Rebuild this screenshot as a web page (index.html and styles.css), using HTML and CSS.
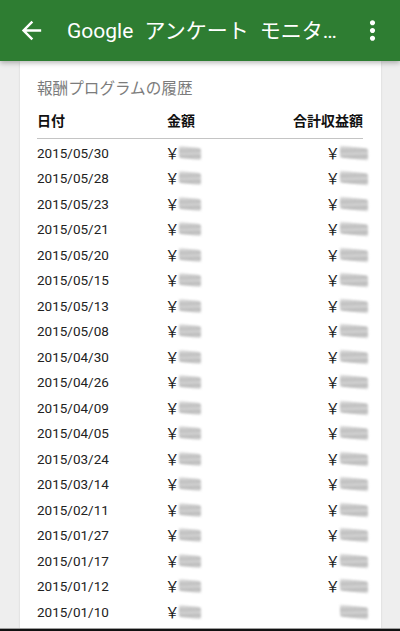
FILE: index.html
```html
<!DOCTYPE html>
<html lang="ja">
<head>
<meta charset="utf-8">
<link rel="stylesheet" href="styles.css">
</head>
<body>
<div class="screen">
  <header class="appbar">
    <svg class="back" viewBox="0 0 24 24" width="29" height="29"><path fill="#fff" d="M20 11H7.83l5.59-5.59L12 4l-8 8 8 8 1.41-1.41L7.83 13H20v-2z"/></svg>
    <div class="title">Google アンケート モニタ…</div>
    <svg class="more" viewBox="0 0 24 24" width="31" height="31"><path fill="#fff" d="M12 8c1.1 0 2-.9 2-2s-.9-2-2-2-2 .9-2 2 .9 2 2 2zm0 2c-1.1 0-2 .9-2 2s.9 2 2 2 2-.9 2-2-.9-2-2-2zm0 6c-1.1 0-2 .9-2 2s.9 2 2 2 2-.9 2-2-.9-2-2-2z"/></svg>
  </header>
  <main class="content">
    <section class="card">
      <h2 class="card-title">報酬プログラムの履歴</h2>
      <div class="thead">
        <span class="c-date">日付</span>
        <span class="c-amt">金額</span>
        <span class="c-total">合計収益額</span>
      </div>
      <div class="rows">
        <div class="row"><span class="c-date">2015/05/30</span><span class="c-amt"><b class="yen">￥</b><i class="blur s"></i></span><span class="c-total"><b class="yen">￥</b><i class="blur l"></i></span></div>
        <div class="row"><span class="c-date">2015/05/28</span><span class="c-amt"><b class="yen">￥</b><i class="blur s"></i></span><span class="c-total"><b class="yen">￥</b><i class="blur l"></i></span></div>
        <div class="row"><span class="c-date">2015/05/23</span><span class="c-amt"><b class="yen">￥</b><i class="blur s"></i></span><span class="c-total"><b class="yen">￥</b><i class="blur l"></i></span></div>
        <div class="row"><span class="c-date">2015/05/21</span><span class="c-amt"><b class="yen">￥</b><i class="blur s"></i></span><span class="c-total"><b class="yen">￥</b><i class="blur l"></i></span></div>
        <div class="row"><span class="c-date">2015/05/20</span><span class="c-amt"><b class="yen">￥</b><i class="blur s"></i></span><span class="c-total"><b class="yen">￥</b><i class="blur l"></i></span></div>
        <div class="row"><span class="c-date">2015/05/15</span><span class="c-amt"><b class="yen">￥</b><i class="blur s"></i></span><span class="c-total"><b class="yen">￥</b><i class="blur l"></i></span></div>
        <div class="row"><span class="c-date">2015/05/13</span><span class="c-amt"><b class="yen">￥</b><i class="blur s"></i></span><span class="c-total"><b class="yen">￥</b><i class="blur l"></i></span></div>
        <div class="row"><span class="c-date">2015/05/08</span><span class="c-amt"><b class="yen">￥</b><i class="blur s"></i></span><span class="c-total"><b class="yen">￥</b><i class="blur l"></i></span></div>
        <div class="row"><span class="c-date">2015/04/30</span><span class="c-amt"><b class="yen">￥</b><i class="blur s"></i></span><span class="c-total"><b class="yen">￥</b><i class="blur l"></i></span></div>
        <div class="row"><span class="c-date">2015/04/26</span><span class="c-amt"><b class="yen">￥</b><i class="blur s"></i></span><span class="c-total"><b class="yen">￥</b><i class="blur l"></i></span></div>
        <div class="row"><span class="c-date">2015/04/09</span><span class="c-amt"><b class="yen">￥</b><i class="blur s"></i></span><span class="c-total"><b class="yen">￥</b><i class="blur l"></i></span></div>
        <div class="row"><span class="c-date">2015/04/05</span><span class="c-amt"><b class="yen">￥</b><i class="blur s"></i></span><span class="c-total"><b class="yen">￥</b><i class="blur l"></i></span></div>
        <div class="row"><span class="c-date">2015/03/24</span><span class="c-amt"><b class="yen">￥</b><i class="blur s"></i></span><span class="c-total"><b class="yen">￥</b><i class="blur l"></i></span></div>
        <div class="row"><span class="c-date">2015/03/14</span><span class="c-amt"><b class="yen">￥</b><i class="blur s"></i></span><span class="c-total"><b class="yen">￥</b><i class="blur l"></i></span></div>
        <div class="row"><span class="c-date">2015/02/11</span><span class="c-amt"><b class="yen">￥</b><i class="blur s"></i></span><span class="c-total"><b class="yen">￥</b><i class="blur l"></i></span></div>
        <div class="row"><span class="c-date">2015/01/27</span><span class="c-amt"><b class="yen">￥</b><i class="blur s"></i></span><span class="c-total"><b class="yen">￥</b><i class="blur l"></i></span></div>
        <div class="row"><span class="c-date">2015/01/17</span><span class="c-amt"><b class="yen">￥</b><i class="blur s"></i></span><span class="c-total"><b class="yen">￥</b><i class="blur l"></i></span></div>
        <div class="row"><span class="c-date">2015/01/12</span><span class="c-amt"><b class="yen">￥</b><i class="blur s"></i></span><span class="c-total"><b class="yen">￥</b><i class="blur l"></i></span></div>
        <div class="row"><span class="c-date">2015/01/10</span><span class="c-amt"><b class="yen">￥</b><i class="blur s"></i></span><span class="c-total"><i class="blur l"></i></span></div>
      </div>
    </section>
  </main>
  <div class="bottom-edge"></div>
</div>
</body>
</html>
```

FILE: styles.css
```css
* { box-sizing: border-box; }
html, body { margin: 0; padding: 0; }
body {
  background: #eeeeee;
  font-family: Roboto, "Noto Sans CJK JP", sans-serif;
  color: #212121;
}
.screen {
  height: 631px;
  display: flex;
  flex-direction: column;
  overflow: hidden;
}
.appbar {
  flex: 0 0 61px;
  height: 61px;
  background: #2e7d32;
  display: flex;
  align-items: center;
  padding-left: 17px;
  position: relative;
  z-index: 2;
  box-shadow: 0 2px 5px rgba(0,0,0,0.28);
}
.back { flex: 0 0 auto; }
.title {
  margin-left: 21px;
  flex: 0 0 280px;
  color: #fff;
  font-size: 21px;
  word-spacing: 6px;
  white-space: nowrap;
  line-height: 28px;
}
.more { margin-left: 10px; flex: 0 0 auto; }
.content {
  flex: 1 1 auto;
  padding: 0 19px 0 20px;
  display: flex;
  min-height: 0;
}
.card {
  flex: 1 1 auto;
  background: #fff;
  padding: 16px 18px 0 17px;
  box-shadow: 0 1px 2px rgba(0,0,0,0.12);
}
.card-title {
  margin: 0;
  font-size: 15.6px;
  font-weight: normal;
  line-height: 24px;
  color: #7c7c7c;
}
.thead, .row {
  display: grid;
  grid-template-columns: 130px 1fr auto;
  align-items: center;
}
.thead {
  margin-top: 8px;
  line-height: 24px;
  padding-bottom: 5px;
  border-bottom: 1px solid #c4c4c4;
  font-size: 14px;
  font-weight: bold;
  color: #111;
}
.rows { padding-top: 1px; }
.row {
  height: 25.5px;
  font-size: 13.5px;
  color: #222;
}
.c-total { display: flex; justify-content: flex-end; align-items: center; }
.c-amt { display: flex; align-items: center; }
.yen {
  font-family: "Noto Sans CJK JP", sans-serif;
  font-weight: normal;
  font-size: 14.5px;
  line-height: 16px;
  color: #1a1a1a;
  margin-left: -2px;
  margin-right: -1px;
}
.blur {
  display: inline-block;
  height: 12px;
  background: linear-gradient(172deg, #e6e6e6 0%, #bdbdbd 35%, #d4d4d4 55%, #b8b8b8 75%, #e2e2e2 100%);
  filter: blur(1.2px);
  border-radius: 2px;
  transform: skewY(6deg);
}
.blur.s { width: 22px; margin-left: 0; }
.blur.l { width: 28px; margin-left: 1px; margin-right: -5px; }
.bottom-edge {
  flex: 0 0 3px;
  background: #111;
  border-top: 1px solid #9e9e9e;
}
```
